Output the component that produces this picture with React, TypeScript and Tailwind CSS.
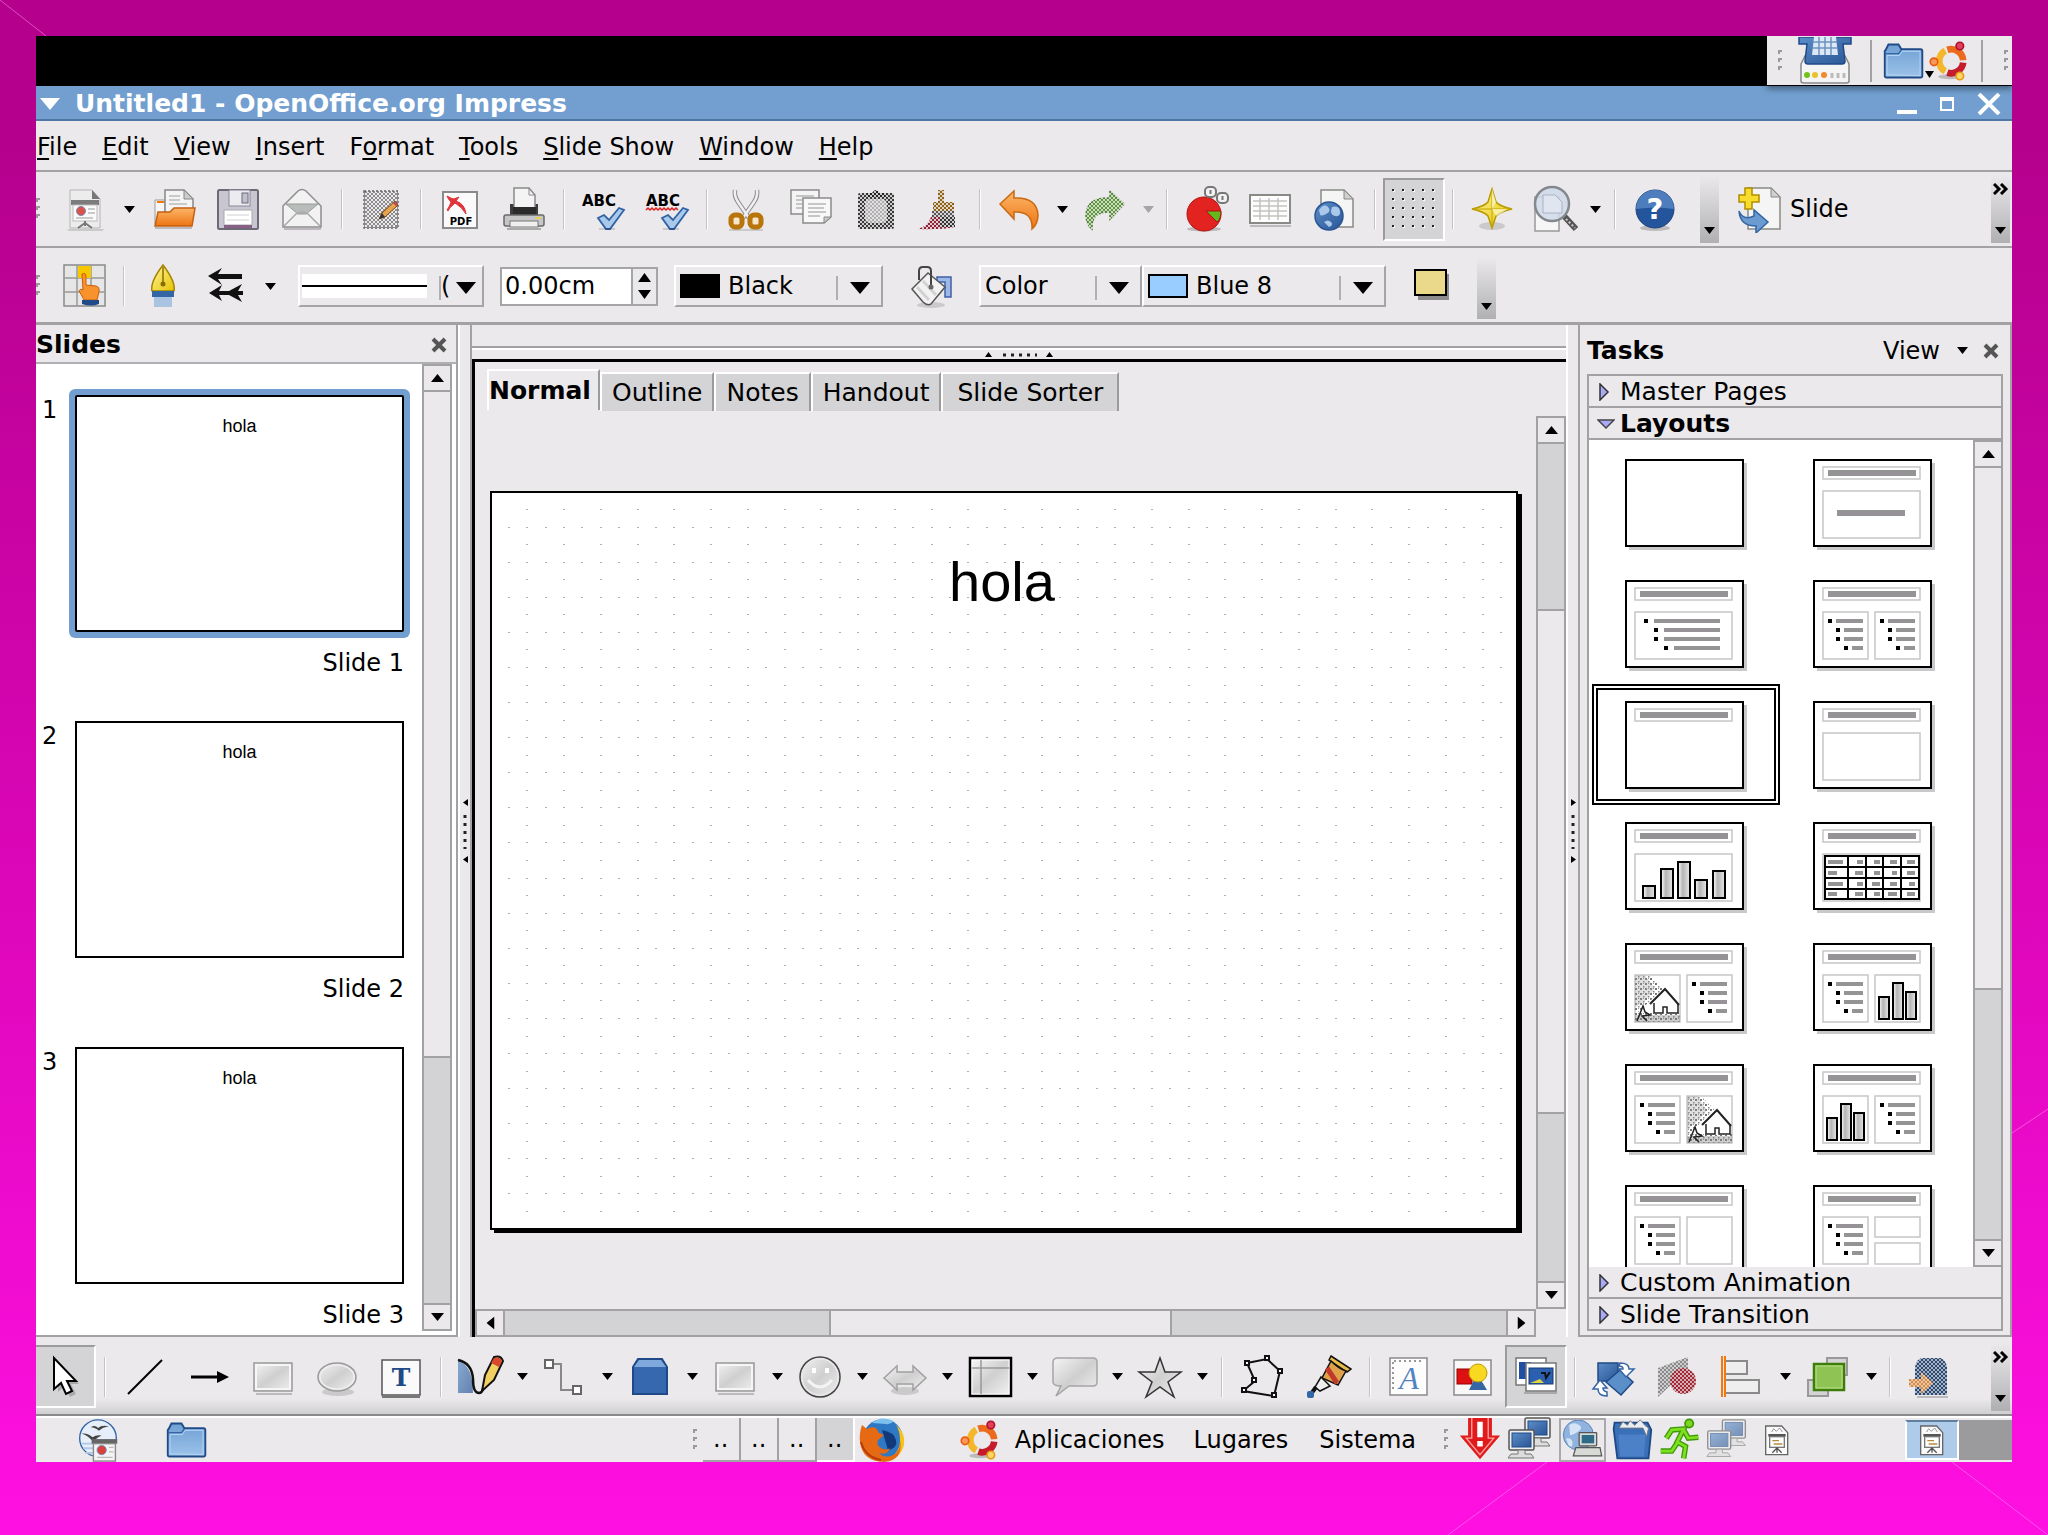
// App.tsx

import React from 'react';

/* ------------------------------------------------------------------ */
/* Shared drawing helpers                                              */
/* ------------------------------------------------------------------ */

interface IconProps {
  children?: React.ReactNode;
  className?: string;
}

// Every toolbar icon is drawn on a 48 x 48 field
const Icon: React.FC<IconProps> = ({ children, className = 'h-12 w-12' }) => (
  <svg viewBox="0 0 48 48" className={`shrink-0 ${className}`} aria-hidden="true">
    {children}
  </svg>
);

const SharedDefs: React.FC = () => (
  <svg className="absolute h-0 w-0" aria-hidden="true">
    <defs>
      <pattern id="hatch" width="4" height="4" patternUnits="userSpaceOnUse">
        <rect width="2" height="2" fill="#ebe9eb" />
        <rect x="2" y="2" width="2" height="2" fill="#ebe9eb" />
      </pattern>
      <pattern id="speckle" width="5" height="5" patternUnits="userSpaceOnUse">
        <rect width="2" height="2" fill="#777" />
        <rect x="3" y="3" width="1.5" height="1.5" fill="#888" />
        <rect x="3" width="1" height="1" fill="#999" />
      </pattern>
      <linearGradient id="gBlue" x1="0" y1="0" x2="0" y2="1">
        <stop offset="0" stopColor="#6f9fd3" />
        <stop offset="1" stopColor="#9cc3ea" />
      </linearGradient>
      <linearGradient id="gDeep" x1="0" y1="0" x2="1" y2="1">
        <stop offset="0" stopColor="#5b8ec8" />
        <stop offset="1" stopColor="#2a5595" />
      </linearGradient>
      <linearGradient id="gGray" x1="0" y1="0" x2="1" y2="1">
        <stop offset="0" stopColor="#f4f4f4" />
        <stop offset="0.5" stopColor="#cfcfcf" />
        <stop offset="1" stopColor="#f0f0f0" />
      </linearGradient>
      <linearGradient id="gOrange" x1="0" y1="0" x2="0" y2="1">
        <stop offset="0" stopColor="#fcb66a" />
        <stop offset="1" stopColor="#ee7411" />
      </linearGradient>
      <linearGradient id="gYellow" x1="0" y1="0" x2="1" y2="1">
        <stop offset="0" stopColor="#fdf6a0" />
        <stop offset="1" stopColor="#e6c300" />
      </linearGradient>
      <linearGradient id="gBar" x1="0" y1="0" x2="1" y2="0">
        <stop offset="0" stopColor="#fff" />
        <stop offset="0.4" stopColor="#b4b4b4" />
        <stop offset="1" stopColor="#e8e8e8" />
      </linearGradient>
    </defs>
  </svg>
);

const Page: React.FC<{ x?: number; y?: number; w?: number; h?: number }> = ({ x = 12, y = 4, w = 26, h = 38 }) => (
  <g>
    <path d={`M${x} ${y}h${w - 9}l9 9v${h - 9}h${-w}z`} fill="#f5f5f5" stroke="#888a85" strokeWidth="1.5" />
    <path d={`M${x + w - 9} ${y}v9h9z`} fill="#d0d0d0" stroke="#888a85" />
  </g>
);

const FolderIcon: React.FC = () => (
  <Icon className="h-12 w-11">
    <path d="M4 12l3-6h11l3 5h21a2 2 0 012 2v27a2 2 0 01-2 2H5a2 2 0 01-2-2V13z" fill="url(#gBlue)" stroke="#204a87" strokeWidth="2" />
    <path d="M4 16h14l3-4" fill="none" stroke="#3465a4" strokeWidth="1.5" />
    <path d="M5.500 39V18H19l3-4.500h19.500V40z" fill="none" stroke="#b8d6f2" strokeWidth="1" />
  </Icon>
);

const UbuntuIcon: React.FC = () => (
  <Icon className="h-12 w-10">
    <ellipse cx="25" cy="43" rx="14" ry="3" fill="#0003" />
    <g fill="none" strokeWidth="8">
      <path d="M19.500 36.500A14.500 14.500 0 0119.500 11.500" stroke="#f4b72c" />
      <path d="M22 10.500A14.500 14.500 0 0141 23" stroke="#ec6a1c" />
      <path d="M41 26A14.500 14.500 0 0122 38" stroke="#c51c2c" />
    </g>
    <circle cx="6" cy="25" r="4.500" fill="#f79a5b" stroke="#ec5b12" strokeWidth="2" />
    <circle cx="37" cy="6" r="4.500" fill="#e0405a" stroke="#b01030" strokeWidth="2" />
    <circle cx="37" cy="42" r="4.500" fill="#fbd66b" stroke="#e89a10" strokeWidth="2" />
  </Icon>
);

const Monitor: React.FC<{ x: number; y: number }> = ({ x, y }) => (
  <g>
    <rect x={x} y={y} width="25" height="20" rx="1.500" fill="#eee" stroke="#555" strokeWidth="1.500" />
    <rect x={x + 3} y={y + 3} width="19" height="14" fill="url(#gDeep)" stroke="#204a87" />
    <path d={`M${x + 9} ${y + 20}h7v4h6l3 4h-26l3-4h7z`} fill="#ddd" stroke="#777" />
  </g>
);

const ImpressDocIcon: React.FC = () => (
  <Icon className="h-10 w-8">
    <path d="M7 3h24l9 10v33H7z" fill="#fafafa" stroke="#666" strokeWidth="2" />
    <path d="M16 12l3-5 4 4 5-5 4 6" fill="none" stroke="#999" strokeWidth="1.5" />
    <rect x="11" y="15" width="26" height="4" fill="#555" />
    <rect x="13" y="19" width="22" height="16" fill="#fff" stroke="#777" strokeWidth="2" />
    <path d="M17 25h10M19 30h13" stroke="#b58b3a" strokeWidth="2" />
    <path d="M24 35v8M24 36l-7 7M24 36l7 7" stroke="#555" strokeWidth="2" />
  </Icon>
);

/* ------------------------------------------------------------------ */
/* Standard toolbar icons                                              */
/* ------------------------------------------------------------------ */

const NewIcon = () => (
  <Icon>
    <path d="M6 44h38l-3 2H8z" fill="#0002" />
    <path d="M9 5h22l8 9v29H9z" fill="#ececec" stroke="#b5b5b5" />
    <path d="M31 5v9h8z" fill="#777" />
    <rect x="10" y="15" width="28" height="5" fill="#7c7c7c" />
    <rect x="12" y="20" width="24" height="16" fill="#fafafa" stroke="#bbb" />
    <circle cx="20" cy="26" r="4.500" fill="#d9534a" stroke="#7a88b8" />
    <path d="M27 24h7M27 28h7M15 33h17" stroke="#bbb" strokeWidth="1.500" />
    <path d="M24 36v5M24 38l-7 5M24 38l7 5" stroke="#777" strokeWidth="2" fill="none" />
  </Icon>
);

const OpenIcon = () => (
  <Icon>
    <path d="M5 15h10v24H5z" fill="#f6f6f6" stroke="#9a9a9a" />
    <path d="M15 5h19l9 9v18H15z" fill="#f4f4f4" stroke="#888" strokeWidth="1.500" />
    <path d="M34 5v9h9z" fill="#ccc" stroke="#888" />
    <path d="M19 11h11M19 15h11M19 19h18" stroke="#bbb" strokeWidth="1.500" />
    <path d="M7 17h7" stroke="#f57900" strokeWidth="2" />
    <path d="M5 41l3-14h12l4-4h21l-3 18z" fill="url(#gOrange)" stroke="#c45f10" strokeWidth="1.500" />
    <path d="M5 43h37" stroke="#0003" strokeWidth="2" />
  </Icon>
);

const SaveIcon = () => (
  <Icon>
    <rect x="4" y="5" width="40" height="39" rx="1.500" fill="#c9c6d2" stroke="#6d6a78" strokeWidth="2" />
    <rect x="15" y="5" width="21" height="16" fill="#ececf0" stroke="#8a8794" />
    <rect x="28" y="8" width="6" height="10" fill="#c0bfd0" stroke="#6d6a78" />
    <rect x="10" y="25" width="28" height="15" fill="#fff" stroke="#aaa" />
    <path d="M13 30h22M13 35h22" stroke="#d0d0d0" />
    <rect x="10" y="40" width="28" height="3" fill="#8a5f86" />
  </Icon>
);

const MailIcon = () => (
  <Icon>
    <path d="M5 21L20 6q4-3 8 0l15 15v21H5z" fill="#f2f2f2" stroke="#8d8d8d" strokeWidth="1.500" />
    <path d="M8 19h32L28 29h-8z" fill="#b9bdb9" stroke="#999" />
    <path d="M6 41l13-13M42 41L29 28M19 29q5-4 10 0" fill="none" stroke="#aaa" strokeWidth="1.500" />
    <path d="M6 44h37" stroke="#0003" strokeWidth="2" />
  </Icon>
);

const EditFileIcon = () => (
  <Icon>
    <rect x="7" y="6" width="34" height="37" fill="#8c8c8c" />
    <rect x="7" y="6" width="34" height="37" fill="url(#hatch)" />
    <rect x="7" y="6" width="34" height="37" fill="none" stroke="#666" strokeWidth="1.5" strokeDasharray="2 2" />
    <path d="M22 34l3-6 13-12 3 4-13 12z" fill="#e9a34e" stroke="#7a4a15" />
    <path d="M22 34l6-2-3-4z" fill="#333" />
    <path d="M37 17l3 3" stroke="#b94a5a" strokeWidth="3" />
  </Icon>
);

const PdfIcon = () => (
  <Icon>
    <rect x="7" y="7" width="34" height="36" fill="#fafafa" stroke="#8a8a8a" strokeWidth="2" />
    <path d="M11 11q5 3 7 3l5-2-3 4q9 3 10 13-4-7-11-11-6 5-7 8l-1-1q3-4 4-8-3-3-4-6z" fill="#e0333a" stroke="#e0333a" />
    <text x="25" y="40" fontSize="10" fontWeight="bold" fontFamily="DejaVu Sans" textAnchor="middle">PDF</text>
  </Icon>
);

const PrintIcon = () => (
  <Icon>
    <path d="M10 19h4v12h20V19h4v13H10z" fill="#3b3b3b" />
    <path d="M14 3h15l6 7v17H14z" fill="#f4f4f4" stroke="#8a8a8a" strokeWidth="1.500" />
    <path d="M29 3v7h6" fill="none" stroke="#8a8a8a" />
    <rect x="13" y="22" width="23" height="9" fill="#2b2b2b" />
    <rect x="4" y="30" width="40" height="11" rx="2" fill="#c6c6c6" stroke="#6a6a6a" strokeWidth="1.500" />
    <rect x="10" y="36" width="28" height="6" fill="#efefef" stroke="#777" />
    <rect x="36" y="32" width="5" height="2" fill="#e9d24a" />
    <path d="M7 44h34" stroke="#0004" strokeWidth="2" />
  </Icon>
);

const SpellIcon: React.FC<{ wavy?: boolean }> = ({ wavy }) => (
  <Icon>
    <text x="20" y="21" fontSize="15" fontWeight="bold" fontFamily="DejaVu Sans" textAnchor="middle">ABC</text>
    {wavy && <path d="M3 25l2-2 2 2 2-2 2 2 2-2 2 2 2-2 2 2 2-2 2 2 2-2 2 2 2-2 2 2 2-2 2 2" fill="none" stroke="#d22" strokeWidth="1.500" />}
    <path d="M19 33l6-3 5 5 10-12 5 2-14 19h-4z" fill="#a9c9ec" stroke="#2f62a3" strokeWidth="1.800" />
    <path d="M20 44h16" stroke="#0002" strokeWidth="2" />
  </Icon>
);

const CutIcon = () => (
  <Icon>
    <path d="M13 5q-1 6 3 12l11 16M35 5q1 6-3 12L21 33" fill="none" stroke="#8c8c8c" strokeWidth="4.500" />
    <path d="M13 5q-1 6 3 12l11 16M35 5q1 6-3 12L21 33" fill="none" stroke="#f0f0f0" strokeWidth="2.500" />
    <rect x="9" y="30" width="11" height="12" rx="4" fill="#f7e6c8" stroke="#b8750c" strokeWidth="5" />
    <rect x="28" y="30" width="11" height="12" rx="4" fill="#f7e6c8" stroke="#b8750c" strokeWidth="5" />
    <path d="M7 45h34" stroke="#0002" strokeWidth="2" />
  </Icon>
);

const CopyIcon = () => (
  <Icon>
    <rect x="4" y="5" width="28" height="24" fill="#f4f4f4" stroke="#8a8a8a" strokeWidth="1.500" />
    <path d="M9 11h18M9 15h6M9 19h6M9 23h6" stroke="#b5b5b5" strokeWidth="1.500" />
    <path d="M16 13h28v19l-7 6H16z" fill="#f8f8f8" stroke="#8a8a8a" strokeWidth="1.500" />
    <path d="M44 32h-7v6z" fill="#ccc" stroke="#8a8a8a" />
    <path d="M21 19h18M21 23h16M21 27h18M21 31h12" stroke="#b5b5b5" strokeWidth="1.500" />
  </Icon>
);

const PasteIcon = () => (
  <Icon>
    <rect x="6" y="8" width="36" height="36" rx="2" fill="#3a3a3a" />
    <rect x="13" y="14" width="22" height="24" rx="5" fill="#b0b0b0" />
    <path d="M15 12V8h5q4-6 8 0h5v4z" fill="#222" />
    <path d="M6 3h36v41H6z" fill="url(#hatch)" opacity="0.850" />
  </Icon>
);

const BrushIcon = () => (
  <Icon>
    <path d="M22 5h6v12h10v9H17v-9h5z" fill="#8f6416" />
    <path d="M16 26h22v6H16z" fill="#555" />
    <path d="M15 32h24v10q-14 3-37 2 10-3 13-12z" fill="#8f2038" />
    <path d="M24 32h15v10H24z" fill="#333" />
    <path d="M2 3h40v42H2z" fill="url(#hatch)" opacity="0.850" />
  </Icon>
);

const UndoIcon = () => (
  <Icon>
    <path d="M5 19L19 6v7q23-1 24 17 0 9-6 14 1-18-18-17v7z" fill="url(#gOrange)" stroke="#c96a12" strokeWidth="1.500" />
  </Icon>
);

const RedoIcon = () => (
  <Icon>
    <path d="M43 19L29 6v7Q6 12 5 30q0 9 6 14-1-18 18-17v7z" fill="#5f9a3c" stroke="#4f7f34" strokeWidth="1.500" />
    <path d="M3 4h42v41H3z" fill="url(#hatch)" opacity="0.8" />
  </Icon>
);

const ChartIcon = () => (
  <Icon>
    <ellipse cx="22" cy="44" rx="17" ry="2.500" fill="#0003" />
    <circle cx="22" cy="29" r="17" fill="#e2231f" stroke="#b01010" />
    <path d="M24 26h15q0 8-4 11z" fill="#63b81c" stroke="#b01010" />
    <rect x="23" y="2" width="11" height="10" rx="4" fill="#f2f2f2" stroke="#777" strokeWidth="2" />
    <rect x="35" y="8" width="11" height="10" rx="4" fill="#f2f2f2" stroke="#777" strokeWidth="2" />
    <path d="M28.500 5v4M40.500 11v4" fill="none" stroke="#777" strokeWidth="2" />
  </Icon>
);

const TableIcon = () => (
  <Icon>
    <rect x="4" y="10" width="40" height="28" fill="#fdfdfd" stroke="#888a85" strokeWidth="2" />
    <path d="M7 16h34M7 21h34M7 26h34M7 31h34M14 13v22M23 13v22M32 13v22" stroke="#c2c4c0" strokeWidth="1.500" />
    <path d="M4 41h41" stroke="#0003" strokeWidth="2" />
  </Icon>
);

const GlobeDocIcon = () => (
  <Icon>
    <Page x={11} y={5} w={32} h={37} />
    <circle cx="19" cy="31" r="14" fill="url(#gDeep)" stroke="#2a5595" strokeWidth="1.500" />
    <path d="M9 25q5-7 9-3t-2 7-6 0zM22 22q7-2 8 4t-5 5-3-9zM14 37q4-3 7 0t-2 5z" fill="#a9c8ea" />
  </Icon>
);

const GridIcon = () => (
  <Icon>
    {[3, 13, 23, 33, 43].map((x) =>
      [5, 14, 23, 32, 41].map((y) => (
        <g key={`${x}-${y}`}>
          <rect x={x} y={y} width="2" height="2" fill="#fff" />
          <rect x={x - 1} y={y - 1} width="2" height="2" fill="#222" />
        </g>
      ))
    )}
  </Icon>
);

const NavigatorIcon = () => (
  <Icon>
    <ellipse cx="24" cy="41" rx="13" ry="4" fill="#0002" />
    <path d="M24 4l4 13q3 4 16 7-13 3-16 7l-4 12-4-12q-3-4-16-7 13-3 16-7z" fill="url(#gYellow)" stroke="#b89a00" strokeWidth="1.500" />
    <path d="M24 4v39M4 24h40" stroke="#c4a500" />
    <path d="M24 24l4-7-4-13zM24 24l16 0-12 7z" fill="#fffbd0" opacity="0.700" />
  </Icon>
);

const ZoomIcon = () => (
  <Icon>
    <path d="M5 12h24v34H5z" fill="#f6f6f6" stroke="#999" strokeWidth="1.500" />
    <path d="M34 31l12 13" stroke="#555" strokeWidth="6" />
    <path d="M36 34l9 9" stroke="#ccc" strokeWidth="2" strokeDasharray="2 2" />
    <circle cx="22" cy="19" r="17" fill="#cfd9e8" fillOpacity="0.850" stroke="#84898f" strokeWidth="2.500" />
    <path d="M13 10h12l7 7v11H13z" fill="#dfe6f0" stroke="#a8b2c4" />
  </Icon>
);

const HelpIcon = () => (
  <Icon>
    <ellipse cx="24" cy="43" rx="15" ry="3" fill="#0003" />
    <circle cx="24" cy="24" r="19" fill="#24549b" stroke="#1c3f7a" />
    <path d="M5 24a19 19 0 0138 0q-19-3-38 0z" fill="#4d7dbd" />
    <text x="24" y="34" fontSize="29" fontWeight="bold" fontFamily="DejaVu Sans" textAnchor="middle" fill="#fff">?</text>
  </Icon>
);

const NewSlideIcon = () => (
  <Icon>
    <Page x={12} y={3} w={32} h={41} />
    <path d="M9 3h7v7h7v7h-7v7H9v-7H3v-7h6z" fill="#f8dc2c" stroke="#b08d00" strokeWidth="1.500" />
    <path d="M3 26q4 10 15 5v-6l14 12-12 11v-7Q4 41 3 26z" fill="#6b9bd1" stroke="#3465a4" strokeWidth="1.500" />
  </Icon>
);

/* ------------------------------------------------------------------ */
/* Line and filling icons                                              */
/* ------------------------------------------------------------------ */

const StylesIcon = () => (
  <Icon>
    <rect x="4" y="3" width="41" height="41" fill="#e6e6e6" stroke="#8a8a8a" strokeWidth="1.500" />
    <path d="M4 16h41M4 30h41M17 3v41M31 3v41" stroke="#999" strokeWidth="1.500" />
    <rect x="18" y="4" width="13" height="12" fill="#f6c800" />
    <path d="M22 12q4-2 4 3v8l10 1q4 1 3 6l-2 8H24q-3-6-5-9 1-3 4-1z" fill="#f7922d" stroke="#c9600c" />
    <path d="M22 38h17v4q-8 3-17 0z" fill="#204a87" />
  </Icon>
);

const PenIcon = () => (
  <Icon>
    <path d="M24 3q13 17 11 26H13Q11 20 24 3z" fill="url(#gYellow)" stroke="#a58400" strokeWidth="1.500" />
    <path d="M24 5v16" stroke="#8a6e00" strokeWidth="1.500" />
    <circle cx="24" cy="22" r="2.500" fill="#8a6e00" />
    <rect x="13" y="29" width="22" height="6" fill="#3465a4" />
    <rect x="15" y="35" width="18" height="10" fill="#8db2dd" opacity="0.700" />
  </Icon>
);

const ArrowStyleIcon = () => (
  <Icon>
    <path d="M5 14l14-8-4 6h24v5H15l4 6z" fill="#111" />
    <path d="M6 31l13-8-3 6h10l13-7-4 7h5v4h-5l4 7-13-7H16l3 6z" fill="#111" />
  </Icon>
);

const BucketIcon = () => (
  <Icon>
    <ellipse cx="24" cy="43" rx="14" ry="3" fill="#0002" />
    <path d="M30 15h14v20h-6V20h-8z" fill="#9db8e6" stroke="#4060a8" strokeWidth="1.500" />
    <path d="M5 27l16-16 17 14-14 17q-4 2-8-2z" fill="#f2f2f2" stroke="#555" strokeWidth="1.500" />
    <path d="M10 25l12 13M16 19l13 14" stroke="#d2d2d2" strokeWidth="3" />
    <path d="M12 18V9q0-4 4-4h4q4 0 4 4v15" fill="none" stroke="#444" strokeWidth="2" />
    <circle cx="24" cy="25" r="2.500" fill="#666" />
  </Icon>
);

const ShadowIcon = () => (
  <Icon>
    <rect x="11" y="12" width="31" height="26" fill="#8c8c8c" />
    <rect x="8" y="8" width="31" height="25" fill="#ead98a" stroke="#000" strokeWidth="2" />
  </Icon>
);

/* ------------------------------------------------------------------ */
/* Drawing toolbar icons                                               */
/* ------------------------------------------------------------------ */

const CursorIcon = () => (
  <Icon>
    <path d="M15 7v30l7-6 5 11 6-3-5-10h8z" fill="#0003" transform="translate(2 2)" />
    <path d="M13 5v31l7-6 5 11 6-3-5-10h9z" fill="#fff" stroke="#000" strokeWidth="2" />
  </Icon>
);

const LineIcon = () => (
  <Icon>
    <path d="M7 41L41 7" stroke="#000" strokeWidth="2" />
  </Icon>
);

const LineArrowIcon = () => (
  <Icon>
    <path d="M6 24h28" stroke="#000" strokeWidth="3" />
    <path d="M32 18l12 6-12 6z" fill="#000" />
  </Icon>
);

const RectIcon = () => (
  <Icon>
    <path d="M7 41h36" stroke="#0003" strokeWidth="2" />
    <rect x="5" y="10" width="38" height="28" fill="url(#gGray)" stroke="#9a9a9a" strokeWidth="1.500" />
    <rect x="7" y="12" width="34" height="24" fill="none" stroke="#f6f6f6" strokeWidth="2" />
  </Icon>
);

const EllipseIcon = () => (
  <Icon>
    <ellipse cx="25" cy="39" rx="16" ry="4" fill="#0002" />
    <ellipse cx="24" cy="24" rx="19" ry="14" fill="url(#gGray)" stroke="#9a9a9a" strokeWidth="1.500" />
    <ellipse cx="24" cy="24" rx="17" ry="12" fill="none" stroke="#eee" strokeWidth="1.500" />
  </Icon>
);

const TextIcon = () => (
  <Icon>
    <rect x="5" y="7" width="38" height="35" fill="#fafafa" stroke="#555" strokeWidth="1.500" />
    <path d="M5 44h38" stroke="#777" strokeWidth="2" />
    <text x="24" y="33" fontSize="25" fontWeight="bold" fontFamily="DejaVu Serif" textAnchor="middle" fill="#204a87">T</text>
  </Icon>
);

const CurveIcon = () => (
  <Icon>
    <path d="M2 8q15 4 15 32H2z" fill="url(#gDeep)" opacity="0.700" />
    <path d="M2 7q14 3 15 19 0 14 6 14 3 0 4-4" fill="none" stroke="#111" strokeWidth="2.500" />
    <path d="M26 38l3-16 9-18q7-2 9 4l-9 19z" fill="#f2cf63" stroke="#111" strokeWidth="2" />
    <path d="M38 5q6-2 8 3l-3 6-8-4z" fill="#d9482b" />
  </Icon>
);

const ConnectorIcon = () => (
  <Icon>
    <path d="M11 11h9v26h12" fill="none" stroke="#888" strokeWidth="2" />
    <rect x="4" y="7" width="8" height="8" fill="#fff" stroke="#666" strokeWidth="2" />
    <rect x="32" y="33" width="8" height="8" fill="#fff" stroke="#666" strokeWidth="2" />
  </Icon>
);

const FlowIcon = () => (
  <Icon>
    <path d="M7 14l5-8h24l5 8v27H7z" fill="#3568ae" stroke="#204a87" strokeWidth="2" />
    <path d="M8 14l5-7h22l5 7z" fill="#7fa9dc" />
  </Icon>
);

const SmileyIcon = () => (
  <Icon>
    <circle cx="24" cy="24" r="20" fill="url(#gGray)" stroke="#444" strokeWidth="1.500" />
    <circle cx="24" cy="24" r="18" fill="none" stroke="#e8e8e8" strokeWidth="1.500" />
    <path d="M18 15v5M31 15v5" stroke="#fff" strokeWidth="4" />
    <path d="M12 27q12 14 24 0" fill="none" stroke="#f4f4f4" strokeWidth="3" />
  </Icon>
);

const DoubleArrowIcon = () => (
  <Icon>
    <ellipse cx="24" cy="38" rx="14" ry="4" fill="#0002" />
    <path d="M3 25l13-12v6h16v-6l13 12-13 12v-6H16v6z" fill="url(#gGray)" stroke="#a0a0a0" strokeWidth="1.500" />
  </Icon>
);

const TableShapeIcon = () => (
  <Icon>
    <rect x="4" y="5" width="41" height="38" fill="#bdbdbd" stroke="#000" strokeWidth="2.500" />
    <rect x="6" y="7" width="37" height="34" fill="url(#gGray)" stroke="#fff" />
    <path d="M15 7v34M6 15h37" stroke="#999" strokeWidth="1.500" />
  </Icon>
);

const CalloutIcon = () => (
  <Icon>
    <path d="M7 5h35q4 0 4 4v20q0 4-4 4H18L5 43l5-10q-8 0-8-4V9q0-4 5-4z" fill="url(#gGray)" stroke="#a5a5a5" strokeWidth="1.500" />
  </Icon>
);

const StarIcon = () => (
  <Icon>
    <path d="M24 5l5 14h16L32 29l6 15-14-10-14 10 6-15L3 19h16z" fill="url(#gGray)" stroke="#333" strokeWidth="1.500" />
  </Icon>
);

const PolygonIcon = () => (
  <Icon>
    <path d="M9 10l20-4 13 12-6 25-31-5 12-10z" fill="none" stroke="#111" strokeWidth="2" />
    {[[7, 8], [27, 3], [40, 16], [34, 40], [4, 35], [14, 25]].map(([x, y]) => (
      <rect key={x} x={x} y={y} width="4" height="4" fill="#fff" stroke="#111" strokeWidth="2" />
    ))}
  </Icon>
);

const GluePenIcon = () => (
  <Icon>
    <path d="M27 3l20 13-4 3L25 7z" fill="#e8bc48" stroke="#111" strokeWidth="1.500" />
    <path d="M27 8q8 8 15 10l-8 14-16-7z" fill="#dfa24a" stroke="#111" strokeWidth="1.500" />
    <path d="M23 15l10 15" stroke="#c0392b" strokeWidth="5" />
    <path d="M17 24l9 9-10 5-5-4z" fill="#eee" stroke="#111" strokeWidth="1.500" />
    <path d="M12 34l-5 7" stroke="#111" strokeWidth="4" />
    <rect x="3" y="38" width="7" height="7" rx="2" fill="#3465a4" />
  </Icon>
);

const FontworkIcon = () => (
  <Icon>
    <rect x="5" y="5" width="37" height="37" fill="#fdfdfd" stroke="#8a8a8a" strokeWidth="1.500" />
    <path d="M9 8h28M8 9v28" stroke="#777" strokeWidth="1.500" strokeDasharray="2 3" />
    <text x="24" y="36" fontSize="32" fontStyle="italic" fontFamily="Liberation Serif" textAnchor="middle" fill="#4f83c2">A</text>
  </Icon>
);

const PictureIcon = () => (
  <Icon>
    <rect x="5" y="7" width="37" height="35" fill="#f8f8f8" stroke="#8a8a8a" strokeWidth="1.500" />
    <rect x="8" y="16" width="15" height="15" fill="#dd1111" stroke="#900" />
    <path d="M20 37l5-10h7l6 10z" fill="#3465a4" />
    <circle cx="29" cy="20" r="9" fill="#f8d820" stroke="#c09a00" />
  </Icon>
);

const GalleryIcon = () => (
  <Icon>
    <rect x="4" y="5" width="30" height="27" fill="#fff" stroke="#777" strokeWidth="1.500" />
    <rect x="7" y="9" width="12" height="17" fill="#1f4fa0" />
    <rect x="14" y="10" width="30" height="28" fill="#fff" stroke="#777" strokeWidth="1.500" />
    <rect x="17" y="15" width="24" height="16" fill="#2b5fb0" stroke="#183a75" />
    <path d="M18 30h14l-4-4z" fill="#e0d23c" />
    <path d="M29 20h4l1 5 4-6" fill="none" stroke="#111" strokeWidth="2" />
    <path d="M12 40h33" stroke="#0003" strokeWidth="2" />
  </Icon>
);

const RotateIcon = () => (
  <Icon>
    <rect x="8" y="10" width="20" height="18" fill="url(#gDeep)" stroke="#204a87" strokeWidth="1.500" />
    <path d="M16 29l14-12 13 12-12 13z" fill="#5a8fca" stroke="#204a87" strokeWidth="1.500" />
    <path d="M30 10q9 0 9 6h5l-8 8-7-8h4q0-3-4-3z" fill="#fff" stroke="#3465a4" strokeWidth="1.500" />
    <path d="M10 27l7 8h-4q0 3 4 4v4q-9 0-9-7H3z" fill="#fff" stroke="#3465a4" strokeWidth="1.500" />
  </Icon>
);

const InteractionIcon = () => (
  <Icon>
    <path d="M4 15L34 4v12L4 44z" fill="#8a8a8a" />
    <circle cx="29" cy="28" r="13" fill="#a02834" />
    <path d="M2 2h42v42H2z" fill="url(#hatch)" opacity="0.700" />
  </Icon>
);

const AlignIcon = () => (
  <Icon>
    <rect x="7" y="8" width="22" height="13" fill="#eee" stroke="#8a8a8a" strokeWidth="2" />
    <rect x="7" y="27" width="34" height="13" fill="#eee" stroke="#8a8a8a" strokeWidth="2" />
    <path d="M4 3v41M7 3v41" stroke="#ef7a10" strokeWidth="2" />
  </Icon>
);

const ArrangeIcon = () => (
  <Icon>
    <rect x="23" y="5" width="20" height="17" fill="#d4d4d4" stroke="#999" strokeWidth="2" />
    <rect x="4" y="27" width="20" height="16" fill="#d4d4d4" stroke="#999" strokeWidth="2" />
    <rect x="10" y="11" width="30" height="26" fill="#8fc454" stroke="#3f7d0a" strokeWidth="2.500" />
    <rect x="12" y="13" width="26" height="22" fill="none" stroke="#b9e08a" />
  </Icon>
);

const ExtrusionIcon = () => (
  <Icon>
    <path d="M10 14q2-9 8-9h18q5 3 6 9v28H10z" fill="#2b4a72" />
    <path d="M4 26h12v-7l12 11-12 11v-7H4z" fill="#d98c40" />
    <path d="M2 2h43v42H2z" fill="url(#hatch)" opacity="0.650" />
    <path d="M12 44h31" stroke="#0003" strokeWidth="2" />
  </Icon>
);

/* ------------------------------------------------------------------ */
/* Desktop panel icons                                                 */
/* ------------------------------------------------------------------ */

const PhoneIcon = () => (
  <svg viewBox="0 0 54 48" className="h-12 w-[54px] shrink-0" aria-hidden="true">
    <path d="M3 27l4-8h40l4 8v17q0 2-3 2H6q-3 0-3-2z" fill="#f4f4f4" stroke="#888" strokeWidth="1.500" />
    <path d="M1 0h52v7h-8l2 17q0 3-3 3H10q-3 0-3-3L9 7H1z" fill="url(#gDeep)" stroke="#204a87" strokeWidth="1.500" />
    <path d="M16 0h22l2 18H14z" fill="#dce8f6" />
    <path d="M21 0v18M27 0v18M33 0v18M15 5h24M15 11h24" stroke="#6f93c0" strokeWidth="1.500" />
    <circle cx="9" cy="38" r="3" fill="#73c21a" />
    <circle cx="17" cy="38" r="3" fill="#e8c22a" />
    <circle cx="26" cy="38" r="3" fill="#f08a2a" />
    <path d="M34 36v5M40 36v5M46 36v5" stroke="#bbb" strokeWidth="3" />
  </svg>
);

const ImpressAppIcon = () => (
  <Icon className="h-11 w-12">
    <circle cx="24" cy="22" r="20" fill="#e6eef9" stroke="#3465a4" strokeWidth="1.500" />
    <path d="M6 28h22M8 33h16M10 38h12" stroke="#b3c8e6" strokeWidth="2" />
    <path d="M16 10q5-3 8 1 4-4 12-2-7 1-11 5-4-4-9-4zM6 17q7-1 12 4 4-3 10-2-6 2-9 8-4-7-13-10z" fill="#444" />
    <path d="M17 23h28v5H17z" fill="#666" />
    <rect x="19" y="28" width="24" height="19" fill="#f4f4f4" stroke="#888" strokeWidth="1.500" />
    <circle cx="28" cy="35" r="5" fill="#d9413a" stroke="#6a8ac0" />
    <path d="M36 32h5M36 37h5M23 43h17" stroke="#bbb" strokeWidth="1.500" />
  </Icon>
);

const FirefoxIcon = () => (
  <Icon className="h-12 w-12">
    <circle cx="25" cy="23" r="20" fill="#2f78c4" />
    <path d="M14 7q9-8 22-2-4 4-8 3z" fill="#7cc0ee" />
    <path d="M24 14q12 2 14 10t-8 10" fill="#123a7a" />
    <path d="M38 9q10 8 8 20-4 15-20 16 16-6 16-21 0-9-4-15z" fill="#f6c21c" />
    <path d="M4 9l5 4q4-3 9-1l3 5 5 2-6 5q-2 5 3 8t9 0q-3 8-11 5 6 6 14 2t7-15q4 20-16 22Q4 45 2 26 1 17 4 9z" fill="#e66a14" />
    <path d="M3 26q4 15 20 18" fill="none" stroke="#b63b0a" strokeWidth="2" />
  </Icon>
);

const UpdateIcon = () => (
  <Icon className="h-12 w-11">
    <path d="M11 0h26v19h9L24 45 2 19h9z" fill="#e11b1b" />
    <path d="M15 0v22h-6l15 18 15-18h-6V0" fill="none" stroke="#f7a0a0" strokeWidth="1.500" />
    <path d="M21 4h6v17h-6zM21 25h6v6h-6z" fill="#fff" />
  </Icon>
);

const NetworkIcon: React.FC<{ faded?: boolean }> = ({ faded }) => (
  <Icon className={faded ? 'h-11 w-11 opacity-60' : 'h-12 w-12'}>
    <Monitor x={19} y={2} />
    <Monitor x={3} y={14} />
  </Icon>
);

const GlobeNetIcon = () => (
  <Icon className="h-10 w-[43px]">
    <circle cx="19" cy="18" r="18" fill="#8fb2de" stroke="#4c78b4" />
    <path d="M8 6q6-4 12 0t-3 9-8 2zM4 22q8-1 8 6t-5 2z" fill="#d5e4f5" />
    <rect x="20" y="15" width="21" height="16" rx="1" fill="#d8dad6" stroke="#555" strokeWidth="1.500" />
    <rect x="23" y="18" width="15" height="10" fill="#2f6a86" />
    <path d="M16 33h29l2 10H13z" fill="#d8dad6" stroke="#555" strokeWidth="1.500" />
  </Icon>
);

const TrashIcon = () => (
  <Icon className="h-12 w-11">
    <path d="M5 5h36l4 8-3 31H8L4 12z" fill="#3a70b8" stroke="#204a87" strokeWidth="2" />
    <path d="M10 11l4-7 5 4 3-5 5 5 6-6 5 6 4 3-2 9-4-9z" fill="#e9eef5" stroke="#777" />
    <path d="M9 18h30l-2 24H11z" fill="#5489cd" opacity="0.700" />
  </Icon>
);

const RunnerIcon = () => (
  <Icon className="h-12 w-11">
    <circle cx="34" cy="6" r="4.500" fill="#7fd61f" stroke="#3f9a0a" strokeWidth="2" />
    <path d="M9 22l6-9 13-1-7 14 9 5-2 13M21 27l-6 9H3M28 13l5 9 11-1" fill="none" stroke="#3f9a0a" strokeWidth="6" />
    <path d="M9 22l6-9 13-1-7 14 9 5-2 13M21 27l-6 9H3M28 13l5 9 11-1" fill="none" stroke="#7fe01f" strokeWidth="3" />
  </Icon>
);

/* ------------------------------------------------------------------ */
/* Toolbar building blocks                                             */
/* ------------------------------------------------------------------ */

interface ToolButtonProps {
  label: string;
  children: React.ReactNode;
  className?: string;
}

const ToolButton: React.FC<ToolButtonProps> = ({ label, children, className = 'w-16' }) => (
  <button type="button" aria-label={label} title={label} className={`flex h-full shrink-0 items-center justify-center ${className}`}>
    {children}
  </button>
);

const pressed = 'border-2 border-t-[#9b9b9b] border-l-[#9b9b9b] border-r-white border-b-white bg-[#d4d3d5]';

const Down: React.FC<{ className?: string }> = ({ className = 'h-[7px] w-[11px]' }) => (
  <svg viewBox="0 0 20 12" preserveAspectRatio="none" className={`shrink-0 ${className}`} aria-hidden="true">
    <path d="M0 0h20L10 12z" fill="currentColor" />
  </svg>
);

const DropArrow: React.FC<{ label: string; className?: string }> = ({ label, className = 'w-[22px] text-black' }) => (
  <button type="button" aria-label={`${label} options`} className={`flex h-full shrink-0 items-center justify-center ${className}`}>
    <Down />
  </button>
);

const Separator: React.FC<{ className?: string }> = ({ className = 'w-[15px]' }) => (
  <div className={`flex h-full shrink-0 items-center justify-center ${className}`}>
    <div className="h-10 w-[2px] border-r border-white bg-[#c4c3c4]" />
  </div>
);

const Overflow: React.FC<{ more?: boolean }> = ({ more }) => (
  <button type="button" aria-label="Toolbar options" className="flex h-full w-[19px] shrink-0 flex-col items-center justify-between bg-linear-to-b from-transparent to-[#b0b0b2] pb-[9px]">
    <svg viewBox="0 0 16 12" className="mt-2 h-3 w-4" aria-hidden="true">
      {more && <path d="M1 1l5 5-5 5M8 1l5 5-5 5" fill="none" stroke="#000" strokeWidth="3" />}
    </svg>
    <Down />
  </button>
);

const Grip: React.FC = () => (
  <svg viewBox="0 0 6 22" className="h-[22px] w-[6px] shrink-0" aria-hidden="true">
    {[0, 8, 16].map((y) => (
      <path key={y} d={`M1 ${y + 4}v-3h3`} fill="none" stroke="#999" strokeWidth="2" />
    ))}
  </svg>
);

interface ComboProps {
  label: string;
  value: string;
  swatch?: string;
  className: string;
}

const Combo: React.FC<ComboProps> = ({ label, value, swatch, className }) => (
  <div className={`flex h-[42px] shrink-0 items-center border-2 border-t-white border-l-white border-r-[#a5a4a6] border-b-[#a5a4a6] pl-1 ${className}`}>
    {swatch && <span className={`mr-2 h-6 w-10 shrink-0 border-2 border-black ${swatch}`} />}
    <select aria-label={label} defaultValue={value} className="min-w-0 flex-1 appearance-none bg-transparent text-[24px] leading-[30px]">
      <option>{value}</option>
    </select>
    <span className="mt-1 h-6 w-[2px] bg-[#b0afb1]" />
    <span className="flex w-[43px] justify-center pt-1">
      <Down className="h-3 w-5" />
    </span>
  </div>
);

/* ------------------------------------------------------------------ */
/* Scroll bars                                                         */
/* ------------------------------------------------------------------ */

interface ScrollBarProps {
  vertical?: boolean;
  before?: string;
  thumb: string;
  after: string;
  className?: string;
}

const turn = { up: 'rotate-180', down: '', left: 'rotate-90', right: '-rotate-90' };

const ScrollBar: React.FC<ScrollBarProps> = ({ vertical, before, thumb, after, className = '' }) => {
  const end = (dir: keyof typeof turn) => (
    <button
      type="button"
      aria-label={`Scroll ${dir}`}
      className={`flex w-[26px] shrink-0 items-center justify-center bg-[#ebe9eb] ${vertical ? 'h-6' : 'h-full'}`}
    >
      <Down className={`h-2 w-[13px] ${turn[dir]}`} />
    </button>
  );
  return (
    <div className={`flex shrink-0 gap-[2px] border-2 border-[#a2a1a3] bg-[#a2a1a3] ${vertical ? 'w-[30px] flex-col' : 'h-[28px]'} ${className}`}>
      {end(vertical ? 'up' : 'left')}
      {before && <div className={`basis-0 bg-[#d3d2d4] ${before}`} />}
      <div className={`basis-0 bg-[#ebe9eb] ${thumb}`} />
      <div className={`basis-0 bg-[#d3d2d4] ${after}`} />
      {end(vertical ? 'down' : 'right')}
    </div>
  );
};

/* ------------------------------------------------------------------ */
/* Slides panel                                                        */
/* ------------------------------------------------------------------ */

const CloseX: React.FC = () => (
  <svg viewBox="0 0 16 16" className="h-4 w-4" aria-hidden="true">
    <path d="M2 2l12 12M14 2L2 14" stroke="#555" strokeWidth="4" />
  </svg>
);

const slides = [1, 2, 3];

const SlidesPanel: React.FC = () => (
  <aside aria-label="Slides" className="flex w-[422px] shrink-0 flex-col border-r-2 border-b-2 border-[#a2a1a3]">
    <div className="flex h-[39px] shrink-0 items-center justify-between border-b-2 border-[#b0afb1] pt-[2px] pr-[7px]">
      <h2 className="text-[25px] leading-[30px] font-bold">Slides</h2>
      <button type="button" aria-label="Close slides" className="flex h-6 w-5 items-center justify-center">
        <CloseX />
      </button>
    </div>
    <div className="flex min-h-0 flex-1 bg-white">
      <ol className="min-h-0 flex-1 overflow-hidden pt-[31px]">
        {slides.map((n) => (
          <li key={n} className="flex pb-[43px] pl-[6px]">
            <span className="w-[33px] shrink-0 text-[24px] leading-[30px]">{n}</span>
            <div className="mr-[18px] flex-1">
              <button
                type="button"
                className={`block h-[237px] w-full border-2 border-black bg-white ${n === 1 ? 'rounded-[2px] ring-[6px] ring-[#729fcf]' : ''}`}
              >
                <span className="flex h-full justify-center pt-[19px] font-['Liberation_Sans',sans-serif] text-[18px] leading-5">hola</span>
              </button>
              <p className="mt-4 text-right text-[24px] leading-[30px]">Slide {n}</p>
            </div>
          </li>
        ))}
      </ol>
      <ScrollBar vertical thumb="grow-[665]" after="grow-[245]" className="mr-1 mb-1" />
    </div>
  </aside>
);

/* ------------------------------------------------------------------ */
/* Slide editor                                                        */
/* ------------------------------------------------------------------ */

const gridPath = (() => {
  let d = '';
  for (let row = 0; row <= 40; row++) {
    for (let col = 0; col <= 54; col++) {
      if (row % 2 === 0 && col % 2 === 0) continue;
      d += `M${Math.round(16 + col * 18.37)} ${Math.round(16 + row * 17.55) + 0.5}h2`;
    }
  }
  return d;
})();

const views = ['Outline', 'Notes', 'Handout', 'Slide Sorter'];

const Editor: React.FC = () => (
  <main className="flex min-w-0 flex-1 flex-col">
    <div className="h-[23px] shrink-0 border-b-2 border-[#a2a1a3]" />
    <div className="flex h-[14px] shrink-0 items-center justify-center gap-[9px] border-t-2 border-t-white border-b-3 border-b-black">
      <Down className="h-[5px] w-[7px] rotate-180" />
      <svg viewBox="0 0 36 4" className="h-1 w-9" aria-hidden="true">
        <path d="M2 2h36" stroke="#222" strokeWidth="3" strokeDasharray="3 5" />
      </svg>
      <Down className="h-[5px] w-[7px] rotate-180" />
    </div>
    <div className="flex min-h-0 flex-1 flex-col border-l-3 border-black">
      <div role="tablist" className="flex h-[50px] shrink-0 items-start pt-[7px] pl-3">
        <button
          type="button"
          role="tab"
          aria-selected="true"
          className="h-[41px] w-[113px] border-t-2 border-r-2 border-l-2 border-t-white border-r-[#9b9b9b] border-l-white text-left text-[25px] leading-[30px] font-bold"
        >
          Normal
        </button>
        {views.map((v) => (
          <button
            key={v}
            type="button"
            role="tab"
            aria-selected="false"
            className="mt-[3px] h-[39px] border-t-2 border-r-2 border-l-2 border-t-white border-r-[#9b9b9b] border-l-white bg-[#d4d3d5] px-[10px] text-[25px] leading-[30px] last:px-[14px]"
          >
            {v}
          </button>
        ))}
      </div>
      <div className="flex min-h-0 flex-1">
        <div className="min-w-0 flex-1 pt-[79px] pr-[18px] pl-[15px]">
          <div className="relative aspect-[1028/739] w-full border-2 border-black bg-white pt-[57px] shadow-[4px_3px_0_#000]">
            <svg className="absolute inset-0 h-full w-full" aria-hidden="true">
              <path d={gridPath} stroke="#b0b0b0" strokeWidth="1" />
            </svg>
            <h1 className="relative pr-1 text-center font-['Liberation_Sans',sans-serif] text-[56px] leading-[64px]">hola</h1>
          </div>
        </div>
        <ScrollBar vertical before="grow-[166]" thumb="grow-[505]" after="grow-[168]" className="mt-1" />
      </div>
      <ScrollBar before="grow-[327]" thumb="grow-[343]" after="grow-[337]" className="mr-[30px]" />
    </div>
  </main>
);

const Splitter: React.FC<{ side: 'left' | 'right' }> = ({ side }) => (
  <div className="flex w-[14px] shrink-0 flex-col items-center justify-center gap-2 border-r-2 border-l-2 border-r-[#a2a1a3] border-l-white">
    <Down className={`h-[5px] w-[7px] ${side === 'left' ? 'rotate-90' : '-rotate-90'}`} />
    <svg viewBox="0 0 4 36" className="h-9 w-1" aria-hidden="true">
      <path d="M2 2v36" stroke="#222" strokeWidth="3" strokeDasharray="3 5" />
    </svg>
    <Down className={`h-[5px] w-[7px] ${side === 'left' ? 'rotate-90' : '-rotate-90'}`} />
  </div>
);

/* ------------------------------------------------------------------ */
/* Tasks panel                                                         */
/* ------------------------------------------------------------------ */

type Block = 'list' | 'chart' | 'picture' | 'empty' | 'split';

interface Layout {
  name: string;
  title?: boolean;
  full?: 'text' | 'list' | 'empty' | 'chart' | 'table';
  halves?: [Block, Block];
}

const layouts: Layout[] = [
  { name: 'Blank Slide' },
  { name: 'Title Slide', title: true, full: 'text' },
  { name: 'Title, Text', title: true, full: 'list' },
  { name: 'Title, 2 Text Blocks', title: true, halves: ['list', 'list'] },
  { name: 'Title Only', title: true },
  { name: 'Title, Object', title: true, full: 'empty' },
  { name: 'Title, Chart', title: true, full: 'chart' },
  { name: 'Title, Spreadsheet', title: true, full: 'table' },
  { name: 'Title, Clipart, Text', title: true, halves: ['picture', 'list'] },
  { name: 'Title, Text, Chart', title: true, halves: ['list', 'chart'] },
  { name: 'Title, Text, Clipart', title: true, halves: ['list', 'picture'] },
  { name: 'Title, Chart, Text', title: true, halves: ['chart', 'list'] },
  { name: 'Title, Text, Object', title: true, halves: ['list', 'empty'] },
  { name: 'Title, Text, 2 Objects', title: true, halves: ['list', 'split'] },
];

const Frame: React.FC<{ x: number; y: number; w: number; h: number }> = ({ x, y, w, h }) => (
  <rect x={x} y={y} width={w} height={h} fill="#fff" stroke="#c6c6c6" strokeWidth="1.5" />
);

const Bullets: React.FC<{ x: number; step: number; end: number; gap: number }> = ({ x, step, end, gap }) => (
  <g>
    {[0, 1, 1, 2].map((level, i) => {
      const left = x + level * step;
      const y = 39 + i * 9;
      return (
        <g key={i}>
          <rect x={left} y={y} width="4" height="4" fill="#000" />
          <rect x={left + gap} y={y} width={end - left - gap} height="4" fill="#959396" />
        </g>
      );
    })}
  </g>
);

const Bars: React.FC<{ bars: number[][]; bottom: number; width: number }> = ({ bars, bottom, width }) => (
  <g>
    {bars.map(([x, top]) => (
      <rect key={x} x={x} y={top} width={width} height={bottom - top} fill="url(#gBar)" stroke="#000" strokeWidth="2" />
    ))}
  </g>
);

const HalfBlock: React.FC<{ kind: Block; x: number }> = ({ kind, x }) => {
  if (kind === 'split') {
    return (
      <g>
        <Frame x={x} y={32} w={45} h={20} />
        <Frame x={x} y={58} w={45} h={21} />
      </g>
    );
  }
  return (
    <g>
      <Frame x={x} y={32} w={45} h={47} />
      {kind === 'list' && <Bullets x={x + 5} step={8} end={x + 40} gap={8} />}
      {kind === 'chart' && <Bars bars={[[x + 4, 54], [x + 18, 40], [x + 31, 49]]} bottom={76} width={10} />}
      {kind === 'picture' && (
        <g>
          <path d={`M${x} 32h14l14 14-26 24 43 0v9h-45z`} fill="url(#speckle)" />
          <path d={`M${x} 32h10l10 14-12 14-8 4z`} fill="#999" opacity="0.3" />
          <path d={`M${x} 72h45v7h-45z`} fill="#888" opacity="0.4" />
          <path d={`M${x + 19} 60l11-12 13 12v11h-24z`} fill="#fff" />
          <path d={`M${x + 15} 61l15-15 14 16`} fill="none" stroke="#222" strokeWidth="2" />
          <path d={`M${x + 19} 60v10h9v-6h4v6h11v-10`} fill="none" stroke="#222" strokeWidth="1.5" />
          <path d={`M${x + 2} 78l6-15 2 6 5 3-8 1 5 5`} fill="none" stroke="#222" strokeWidth="1.5" />
        </g>
      )}
    </g>
  );
};

const LayoutThumb: React.FC<{ layout: Layout }> = ({ layout }) => (
  <svg viewBox="0 0 122 91" className="h-[91px] w-[122px] shrink-0" aria-hidden="true">
    <rect x="4" y="4" width="118" height="87" fill="#c9c8ca" />
    <rect x="1" y="1" width="117" height="86" fill="#fff" stroke="#000" strokeWidth="2" />
    {layout.title && (
      <g>
        <Frame x={10} y={8} w={97} h={12} />
        <rect x="15" y="11" width="88" height="6" fill="#959396" />
      </g>
    )}
    {layout.full && <Frame x={10} y={32} w={97} h={47} />}
    {layout.full === 'text' && <rect x="24" y="51" width="68" height="6" fill="#959396" />}
    {layout.full === 'list' && <Bullets x={19} step={10} end={95} gap={10} />}
    {layout.full === 'chart' && <Bars bars={[[18, 64], [36, 47], [53, 40], [70, 58], [88, 49]]} bottom={76} width={12} />}
    {layout.full === 'table' && (
      <g>
        <path d="M12 34h94v43H12zM12 45h94M12 56h94M12 67h94M35 34v43M53 34v43M70 34v43M88 34v43" fill="#fff" stroke="#000" strokeWidth="2" />
        <path d="M15 40h15M44 40h6M61 40h6M77 40h7M94 40h8M15 51h9M42 51h8M61 51h6M79 51h5M94 51h8M15 62h15M44 62h6M59 62h8M77 62h7M96 62h6M15 72h9M42 72h8M61 72h6M75 72h9M94 72h8" stroke="#959396" strokeWidth="4" />
      </g>
    )}
    {layout.halves && <HalfBlock kind={layout.halves[0]} x={10} />}
    {layout.halves && <HalfBlock kind={layout.halves[1]} x={62} />}
  </svg>
);

const TaskRow: React.FC<{ title: string; open?: boolean }> = ({ title, open }) => (
  <button
    type="button"
    aria-expanded={!!open}
    className={`flex h-8 w-full shrink-0 items-center border-b-2 border-[#a2a1a3] pt-[2px] pl-2 text-left text-[25px] leading-7 ${open ? 'font-bold' : ''}`}
  >
    <svg viewBox="0 0 18 18" className="mr-[5px] h-[18px] w-[18px]" aria-hidden="true">
      {open ? (
        <path d="M1 5h16L9 13z" fill="#a9a9f5" stroke="#444" strokeWidth="1.5" />
      ) : (
        <path d="M3 1v16l8-8z" fill="#a9a9f5" stroke="#333" strokeWidth="1.5" />
      )}
    </svg>
    {title}
  </button>
);

const TasksPanel: React.FC = () => (
  <aside aria-label="Tasks" className="flex w-[432px] shrink-0 flex-col border-r-2 border-b-2 border-r-[#a2a1a3] border-b-[#a2a1a3] px-[7px] pb-1">
    <div className="flex h-[49px] shrink-0 items-center pt-[2px]">
      <h2 className="flex-1 text-[25px] leading-[30px] font-bold">Tasks</h2>
      <button type="button" className="flex items-center gap-[17px] text-[24px] leading-[30px]">
        View
        <Down />
      </button>
      <button type="button" aria-label="Close tasks" className="ml-[11px] flex h-6 w-6 items-center justify-center">
        <CloseX />
      </button>
    </div>
    <div className="flex min-h-0 flex-1 flex-col border-2 border-b-0 border-[#a2a1a3]">
      <TaskRow title="Master Pages" />
      <TaskRow title="Layouts" open />
      <div className="flex min-h-0 flex-1 bg-white">
        <div className="flex-1 overflow-hidden">
          <div className="grid grid-cols-2 pt-[2px] pr-[5px] pl-[3px]">
            {layouts.map((layout) => (
              <button
                key={layout.name}
                type="button"
                aria-label={layout.name}
                className={`flex h-[121px] items-center justify-center pt-1 ${layout.name === 'Title Only' ? 'border-[6px] border-double border-black' : ''}`}
              >
                <LayoutThumb layout={layout} />
              </button>
            ))}
          </div>
        </div>
        <ScrollBar vertical thumb="grow-[523]" after="grow-[251]" className="-mr-[2px]" />
      </div>
      <TaskRow title="Custom Animation" />
      <TaskRow title="Slide Transition" />
    </div>
  </aside>
);

/* ------------------------------------------------------------------ */
/* Bars around the work area                                           */
/* ------------------------------------------------------------------ */

const TitleBar: React.FC = () => (
  <header className="flex h-[35px] shrink-0 items-center border-b-2 border-[#4f77a3] bg-[#729fcf] pt-[2px] pr-[11px] pl-1 text-white">
    <Down className="h-3 w-5" />
    <h1 className="ml-[15px] flex-1 text-[25px] leading-[30px] font-bold">Untitled1 - OpenOffice.org Impress</h1>
    <button type="button" aria-label="Minimize" className="flex h-7 w-10 items-center justify-center">
      <span className="mt-4 h-1 w-5 bg-white" />
    </button>
    <button type="button" aria-label="Maximize" className="flex h-7 w-10 items-center justify-center">
      <span className="h-[14px] w-[14px] border-2 border-t-4 border-white" />
    </button>
    <button type="button" aria-label="Close" className="flex h-7 w-[34px] items-center justify-end">
      <svg viewBox="0 0 24 22" className="h-[22px] w-6" aria-hidden="true">
        <path d="M2 1l20 20M22 1L2 21" stroke="#fff" strokeWidth="4" />
      </svg>
    </button>
  </header>
);

// [before, underlined, after]
const menus = [
  ['', 'F', 'ile'],
  ['', 'E', 'dit'],
  ['', 'V', 'iew'],
  ['', 'I', 'nsert'],
  ['F', 'o', 'rmat'],
  ['', 'T', 'ools'],
  ['', 'S', 'lide Show'],
  ['', 'W', 'indow'],
  ['', 'H', 'elp'],
];

const MenuBar: React.FC = () => (
  <nav className="flex h-[51px] shrink-0 items-center gap-[25px] border-b-2 border-[#a2a1a3] pt-[2px] pl-[1px]">
    {menus.map(([before, key, after]) => (
      <button key={key + after} type="button" className="text-[24px] leading-[30px] whitespace-nowrap">
        {before}
        <u className="decoration-2 underline-offset-3">{key}</u>
        {after}
      </button>
    ))}
  </nav>
);

const StandardToolbar: React.FC = () => (
  <div role="toolbar" aria-label="Standard" className="flex h-[76px] shrink-0 items-center border-b-2 border-[#a2a1a3]">
    <Grip />
    <ToolButton label="New" className="ml-[11px] w-16"><NewIcon /></ToolButton>
    <DropArrow label="New" className="w-[25px]" />
    <ToolButton label="Open"><OpenIcon /></ToolButton>
    <ToolButton label="Save"><SaveIcon /></ToolButton>
    <ToolButton label="Document as E-mail"><MailIcon /></ToolButton>
    <Separator />
    <ToolButton label="Edit File"><EditFileIcon /></ToolButton>
    <Separator />
    <ToolButton label="Export as PDF"><PdfIcon /></ToolButton>
    <ToolButton label="Print"><PrintIcon /></ToolButton>
    <Separator />
    <ToolButton label="Spellcheck"><SpellIcon /></ToolButton>
    <ToolButton label="AutoSpellcheck"><SpellIcon wavy /></ToolButton>
    <Separator />
    <ToolButton label="Cut"><CutIcon /></ToolButton>
    <ToolButton label="Copy" className="w-[66px]"><CopyIcon /></ToolButton>
    <ToolButton label="Paste"><PasteIcon /></ToolButton>
    <ToolButton label="Format Paintbrush"><BrushIcon /></ToolButton>
    <Separator />
    <ToolButton label="Undo"><UndoIcon /></ToolButton>
    <DropArrow label="Undo" />
    <ToolButton label="Redo"><RedoIcon /></ToolButton>
    <DropArrow label="Redo" className="w-[22px] text-[#a5a4a6]" />
    <Separator />
    <ToolButton label="Chart"><ChartIcon /></ToolButton>
    <ToolButton label="Spreadsheet"><TableIcon /></ToolButton>
    <ToolButton label="Hyperlink"><GlobeDocIcon /></ToolButton>
    <Separator className="w-[17px]" />
    <div className="h-[63px]">
      <ToolButton label="Display Grid" className={`w-[62px] ${pressed}`}><GridIcon /></ToolButton>
    </div>
    <Separator />
    <ToolButton label="Navigator"><NavigatorIcon /></ToolButton>
    <ToolButton label="Zoom" className="w-[60px]"><ZoomIcon /></ToolButton>
    <DropArrow label="Zoom" />
    <Separator className="w-[17px]" />
    <ToolButton label="Help"><HelpIcon /></ToolButton>
    <div className="ml-[13px] h-[68px]">
      <Overflow />
    </div>
    <button type="button" className="ml-[17px] flex items-center gap-[6px] text-[24px] leading-[30px]">
      <NewSlideIcon />
      Slide
    </button>
    <div className="mr-[2px] ml-auto h-[68px]">
      <Overflow more />
    </div>
  </div>
);

const LineToolbar: React.FC = () => (
  <div role="toolbar" aria-label="Line and Filling" className="flex h-[77px] shrink-0 items-center border-b-3 border-[#a2a1a3] pt-[2px]">
    <Grip />
    <ToolButton label="Styles and Formatting" className="ml-[10px] w-16"><StylesIcon /></ToolButton>
    <Separator />
    <ToolButton label="Line"><PenIcon /></ToolButton>
    <ToolButton label="Arrow Style"><ArrowStyleIcon /></ToolButton>
    <DropArrow label="Arrow Style" />
    <div className="ml-[17px] flex h-[42px] w-[186px] shrink-0 items-center border-2 border-t-white border-l-white border-r-[#a5a4a6] border-b-[#a5a4a6] pl-[2px]">
      <span className="flex h-6 flex-1 items-center bg-white">
        <span className="h-[2px] w-full bg-black" />
      </span>
      <span className="mt-1 ml-3 h-6 w-[2px] bg-[#b0afb1]" />
      <select aria-label="Line Style" defaultValue="(" className="w-[9px] appearance-none bg-transparent text-[24px] leading-[30px]">
        <option>(</option>
      </select>
      <span className="flex w-8 justify-center pt-1">
        <Down className="h-3 w-5" />
      </span>
    </div>
    <div className="ml-4 flex h-[39px] w-[158px] shrink-0 border-2 border-[#a5a4a6]">
      <input aria-label="Line Width" defaultValue="0.00cm" className="min-w-0 flex-1 bg-white pl-[3px] text-[24px] leading-[30px]" />
      <div className="flex w-[25px] flex-col border-l-2 border-[#a5a4a6]">
        <button type="button" aria-label="Increase width" className="flex flex-1 items-center justify-center">
          <Down className="h-[9px] w-[13px] rotate-180" />
        </button>
        <button type="button" aria-label="Decrease width" className="flex flex-1 items-center justify-center">
          <Down className="h-[9px] w-[13px]" />
        </button>
      </div>
    </div>
    <Combo label="Line Color" value="Black" swatch="bg-black" className="ml-4 w-[209px]" />
    <ToolButton label="Area" className="ml-4 w-16"><BucketIcon /></ToolButton>
    <Combo label="Area Style" value="Color" className="ml-4 w-[163px]" />
    <Combo label="Area Fill" value="Blue 8" swatch="bg-[#99ccff]" className="w-[244px]" />
    <ToolButton label="Shadow" className="ml-[13px] w-16"><ShadowIcon /></ToolButton>
    <div className="mt-1 ml-[14px] h-[62px]">
      <Overflow />
    </div>
  </div>
);

const shapeTools: [string, React.FC][] = [
  ['Curve', CurveIcon],
  ['Connector', ConnectorIcon],
  ['Flowcharts', FlowIcon],
  ['Basic Shapes', RectIcon],
  ['Symbol Shapes', SmileyIcon],
  ['Block Arrows', DoubleArrowIcon],
  ['Table Shapes', TableShapeIcon],
  ['Callouts', CalloutIcon],
  ['Stars', StarIcon],
];

const DrawingToolbar: React.FC = () => (
  <div role="toolbar" aria-label="Drawing" className="flex h-[79px] shrink-0 items-center border-b-2 border-[#8a898b] bg-linear-to-b from-[#ebe9eb] from-80% to-[#cfced0] pt-[2px]">
    <div className="h-[63px]">
      <ToolButton label="Select" className={`w-[60px] border-l-0 ${pressed}`}><CursorIcon /></ToolButton>
    </div>
    <Separator className="w-[17px]" />
    <ToolButton label="Line"><LineIcon /></ToolButton>
    <ToolButton label="Line Ends with Arrow"><LineArrowIcon /></ToolButton>
    <ToolButton label="Rectangle"><RectIcon /></ToolButton>
    <ToolButton label="Ellipse"><EllipseIcon /></ToolButton>
    <ToolButton label="Text"><TextIcon /></ToolButton>
    <Separator />
    {shapeTools.map(([label, Shape]) => (
      <div key={label} className="flex h-full shrink-0">
        <ToolButton label={label} className="w-[63px]"><Shape /></ToolButton>
        <DropArrow label={label} />
      </div>
    ))}
    <Separator className="w-[17px]" />
    <ToolButton label="Points"><PolygonIcon /></ToolButton>
    <ToolButton label="Glue Points" className="w-[68px]"><GluePenIcon /></ToolButton>
    <Separator />
    <ToolButton label="Fontwork Gallery"><FontworkIcon /></ToolButton>
    <ToolButton label="From File"><PictureIcon /></ToolButton>
    <div className="h-[63px]">
      <ToolButton label="Gallery" className={`w-[62px] ${pressed}`}><GalleryIcon /></ToolButton>
    </div>
    <Separator className="w-[15px]" />
    <ToolButton label="Rotate"><RotateIcon /></ToolButton>
    <ToolButton label="Interaction"><InteractionIcon /></ToolButton>
    <ToolButton label="Alignment"><AlignIcon /></ToolButton>
    <DropArrow label="Alignment" />
    <ToolButton label="Arrange"><ArrangeIcon /></ToolButton>
    <DropArrow label="Arrange" />
    <Separator />
    <ToolButton label="Extrusion"><ExtrusionIcon /></ToolButton>
    <div className="mr-[2px] ml-auto h-[68px]">
      <Overflow more />
    </div>
  </div>
);

const TopPanel: React.FC = () => (
  <div className="flex h-[50px] shrink-0 justify-end bg-black">
    <div className="relative z-10 flex h-[49px] w-[245px] items-center overflow-hidden bg-[#ebe9eb] pl-[11px] shadow-[0_4px_6px_#0006]">
      <Grip />
      <button type="button" aria-label="Modem" className="ml-[14px]"><PhoneIcon /></button>
      <span className="ml-[18px] h-[42px] w-[2px] bg-[#a2a1a3]" />
      <button type="button" aria-label="Files" className="ml-[10px]"><FolderIcon /></button>
      <Down className="mt-7 -ml-[1px] h-[7px] w-[9px]" />
      <button type="button" aria-label="Ubuntu menu" className="-ml-[5px]"><UbuntuIcon /></button>
      <span className="ml-3 h-[42px] w-[2px] bg-[#a2a1a3]" />
      <span className="ml-auto flex pr-[2px]"><Grip /></span>
    </div>
  </div>
);

const workspaces = [1, 2, 3, 4];

const Taskbar: React.FC = () => (
  <footer className="flex h-[46px] shrink-0 items-center border-t-2 border-white pl-[38px]">
    <button type="button" aria-label="Impress"><ImpressAppIcon /></button>
    <button type="button" aria-label="Files" className="ml-[43px]"><FolderIcon /></button>
    <div className="ml-auto flex h-full items-center">
      <Grip />
      <div className="ml-1 flex h-full">
        {workspaces.map((w) => (
          <button
            key={w}
            type="button"
            className={`h-full w-[38px] border-r-2 border-b-2 text-[24px] leading-[30px] ${w === 4 ? 'border-white bg-[#d4d3d5]' : 'border-[#a2a1a3]'}`}
          >
            ..
          </button>
        ))}
      </div>
      <button type="button" aria-label="Firefox" className="ml-[3px]"><FirefoxIcon /></button>
      <button type="button" className="ml-[54px] flex items-center gap-[15px] text-[24px] leading-[30px]">
        <UbuntuIcon />
        Aplicaciones
      </button>
      <button type="button" className="ml-[29px] text-[24px] leading-[30px]">Lugares</button>
      <button type="button" className="ml-[31px] text-[24px] leading-[30px]">Sistema</button>
      <span className="ml-7 flex"><Grip /></span>
      <button type="button" aria-label="Updates" className="ml-2"><UpdateIcon /></button>
      <button type="button" aria-label="Network" className="ml-1"><NetworkIcon /></button>
      <button type="button" aria-label="Remote desktop" className="ml-[5px] border-2 border-[#a9a8aa]"><GlobeNetIcon /></button>
      <button type="button" aria-label="Trash" className="ml-1"><TrashIcon /></button>
      <button type="button" aria-label="Log out" className="ml-1"><RunnerIcon /></button>
      <button type="button" aria-label="Disconnected" className="ml-[3px]"><NetworkIcon faded /></button>
      <button type="button" aria-label="Untitled1" className="ml-3"><ImpressDocIcon /></button>
      <button type="button" aria-label="Untitled1 - OpenOffice.org Impress" className="ml-[112px] flex h-10 w-[54px] items-center justify-center border-2 border-white border-t-[#5f7f9f] bg-[#aecbea]">
        <ImpressDocIcon />
      </button>
      <span className="h-10 w-[53px] bg-[#9b9a9c]" />
    </div>
  </footer>
);

const App: React.FC = () => (
  <div className="relative flex h-screen flex-col bg-linear-to-b from-[#b4008c] from-8% via-[#da06b6] via-55% to-[#ff10e2] px-9 pt-9 pb-[73px] font-['DejaVu_Sans',sans-serif] text-black">
    <SharedDefs />
    <svg viewBox="0 0 2048 1535" preserveAspectRatio="none" className="absolute inset-0 h-full w-full" aria-hidden="true">
      <path d="M0 0l46 36M2012 1133l36-24M1547 1462l-99 73M1952 1462l96 73" stroke="#ff7ff0" strokeOpacity="0.6" fill="none" />
    </svg>
    <div className="relative flex min-h-0 flex-1 flex-col overflow-hidden bg-[#ebe9eb]">
      <TopPanel />
      <TitleBar />
      <MenuBar />
      <StandardToolbar />
      <LineToolbar />
      <div className="flex min-h-0 flex-1">
        <SlidesPanel />
        <Splitter side="left" />
        <Editor />
        <Splitter side="right" />
        <TasksPanel />
      </div>
      <DrawingToolbar />
      <Taskbar />
    </div>
  </div>
);

export default App;
